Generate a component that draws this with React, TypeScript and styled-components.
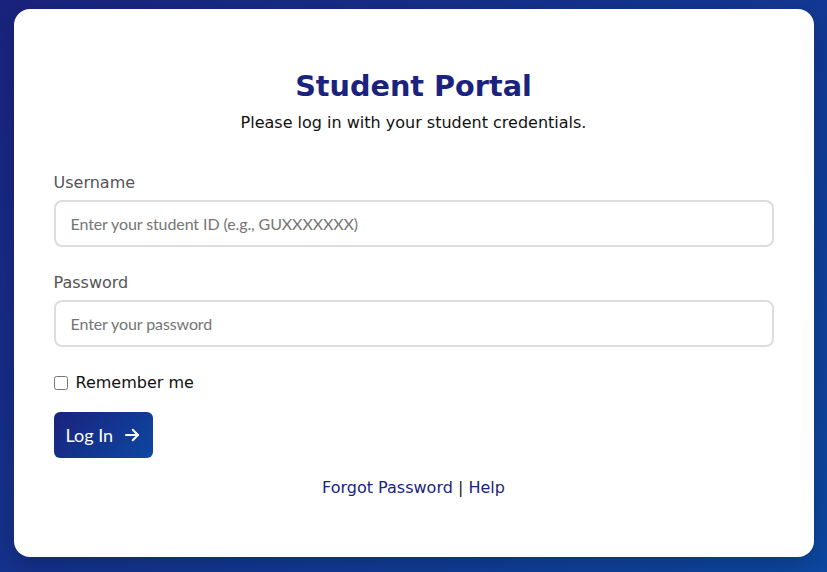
import React, { useState } from 'react';
import styled, { createGlobalStyle } from 'styled-components';

const GlobalStyle = createGlobalStyle`
  html, body {
    margin: 0;
    padding: 0;
  }
  body {
    min-height: 100vh;
    font-family: "DejaVu Sans", sans-serif;
    background: linear-gradient(135deg, #1a237e 0%, #0d47a1 100%);
  }
`;

const Page = styled.div`
  min-height: 100vh;
  display: flex;
  justify-content: center;
  align-items: flex-start;
  padding-top: 9px;
  box-sizing: border-box;
`;

const Card = styled.div`
  width: 800px;
  height: 548px;
  box-sizing: border-box;
  background: #ffffff;
  border-radius: 16px;
  padding: 40px;
  box-shadow: 0 8px 24px rgba(0, 0, 0, 0.2);
`;

const Header = styled.div`
  text-align: center;
  margin-bottom: 41px;
`;

const Title = styled.h1`
  margin: 20px 0 10px;
  font-size: 28.7px;
  font-weight: 700;
  color: #1a237e;
`;

const Subtitle = styled.p`
  margin: 0;
  font-size: 16px;
  color: #111111;
`;

const Field = styled.div`
  display: flex;
  flex-direction: column;
  margin-bottom: 26px;
`;

const Label = styled.label`
  font-size: 16px;
  color: #555555;
  margin-bottom: 8px;
`;

const Input = styled.input`
  height: 47px;
  box-sizing: border-box;
  border: 2px solid #dddddd;
  border-radius: 8px;
  padding: 0 15px;
  font-family: Lato, "Open Sans", sans-serif;
  font-size: 16px;
  letter-spacing: -0.1px;
  color: #333333;
  outline: none;
  &::placeholder {
    color: #757575;
  }
`;

const CheckRow = styled.label`
  display: flex;
  align-items: center;
  gap: 8px;
  font-size: 16px;
  color: #111111;
  margin: 0 0 20px;
`;

const Check = styled.input`
  margin: 0;
  width: 14px;
  height: 14px;
`;

const Button = styled.button`
  display: inline-flex;
  align-items: center;
  gap: 10px;
  height: 46px;
  padding: 0 12px 0 12px;
  border: none;
  border-radius: 6px;
  background: linear-gradient(135deg, #1a237e 0%, #0d47a1 100%);
  color: #ffffff;
  font-family: Lato, "Open Sans", sans-serif;
  font-size: 18px;
  cursor: pointer;
`;

const Links = styled.div`
  text-align: center;
  margin-top: 20px;
  font-size: 16px;
  color: #222222;
`;

const Link = styled.a`
  color: #1a237e;
  text-decoration: none;
`;

const Arrow = () => (
  <svg width="18" height="18" viewBox="0 0 24 24" fill="none" stroke="currentColor" strokeWidth="2.7" strokeLinecap="round" strokeLinejoin="round">
    <path d="M4 12h16" />
    <path d="M13 5l7 7-7 7" />
  </svg>
);

export default function App() {
  const [remember, setRemember] = useState(false);
  return (
    <>
      <GlobalStyle />
      <Page>
        <Card>
          <Header>
            <Title>Student Portal</Title>
            <Subtitle>Please log in with your student credentials.</Subtitle>
          </Header>
          <Field>
            <Label htmlFor="username">Username</Label>
            <Input id="username" placeholder="Enter your student ID (e.g., GUXXXXXXX)" />
          </Field>
          <Field>
            <Label htmlFor="password">Password</Label>
            <Input id="password" type="password" placeholder="Enter your password" />
          </Field>
          <CheckRow>
            <Check type="checkbox" checked={remember} onChange={e => setRemember(e.target.checked)} />
            Remember me
          </CheckRow>
          <Button type="button">
            Log In <Arrow />
          </Button>
          <Links>
            <Link href="#">Forgot Password</Link> | <Link href="#">Help</Link>
          </Links>
        </Card>
      </Page>
    </>
  );
}
